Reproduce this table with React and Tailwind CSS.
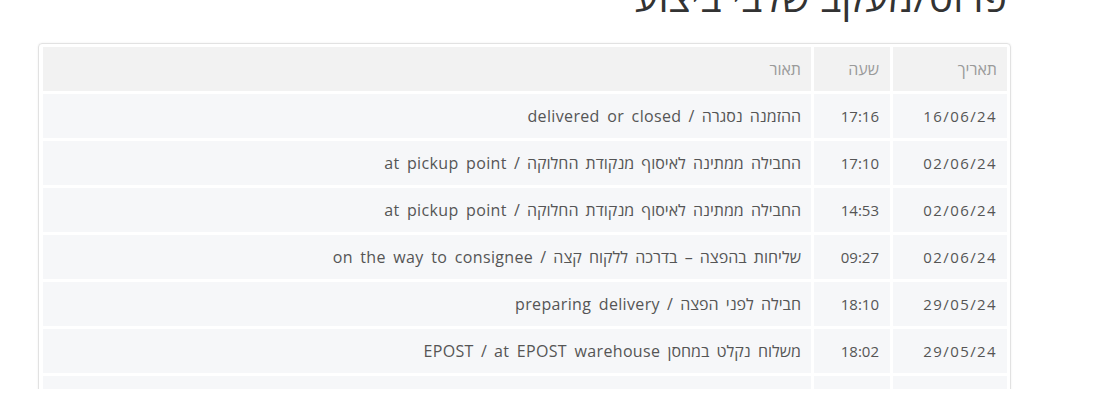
import React from "react";

const rows = [
  ["16/06/24", "17:16", "ההזמנה נסגרה / delivered or closed"],
  ["02/06/24", "17:10", "החבילה ממתינה לאיסוף מנקודת החלוקה / at pickup point"],
  ["02/06/24", "14:53", "החבילה ממתינה לאיסוף מנקודת החלוקה / at pickup point"],
  ["02/06/24", "09:27", "שליחות בהפצה – בדרכה ללקוח קצה / on the way to consignee"],
  ["29/05/24", "18:10", "חבילה לפני הפצה / preparing delivery"],
  ["29/05/24", "18:02", "משלוח נקלט במחסן EPOST / at EPOST warehouse"],
  ["28/05/24", "12:00", "ההזמנה התקבלה / order received"],
];

function Mixed({ text }) {
  const parts = text.split(/([A-Za-z]+(?: [A-Za-z]+)*)/);
  return (
    <>
      {parts.map((p, i) =>
        /^[A-Za-z]/.test(p) ? (
          <span key={i} className="tracking-[0.35px]">
            {p}
          </span>
        ) : (
          <span key={i}>{p}</span>
        )
      )}
    </>
  );
}

export default function App() {
  return (
    <div className="w-[1110px] h-[419px] bg-white overflow-hidden" style={{ fontFamily: '"Open Sans", "DejaVu Sans", sans-serif' }}>
      <div className="h-[389px] overflow-hidden">
        <div dir="rtl" className="ml-[38px] w-[973px]">
          <h2 className="-mt-[23px] pr-[4px] text-[40px] leading-[40px] text-[#333] font-normal">פרוט/מעקב שלבי ביצוע</h2>
          <div className="mt-[26px] border border-[#e2e2e2] rounded-[4px] shadow-[0_0_2px_rgba(0,0,0,0.08)] pl-px">
            <table className="w-full border-separate border-spacing-[3px] text-[15px]">
              <thead>
                <tr className="h-[44px]">
                  <th className="w-[114px] bg-[#f2f2f2] text-right pr-[10px] font-normal text-[16px] text-[#9a9a9a]">תאריך</th>
                  <th className="w-[76px] bg-[#f2f2f2] text-right pr-[11px] font-normal text-[16px] text-[#9a9a9a]">שעה</th>
                  <th className="bg-[#f2f2f2] text-right pr-[10px] font-normal text-[16px] text-[#9a9a9a]">תאור</th>
                </tr>
              </thead>
              <tbody>
                {rows.map((r, i) => (
                  <tr key={i} className="h-[44px]">
                    <td className="bg-[#f6f7f9] text-right pr-[10px] text-[#555] tracking-[1.4px]">{r[0]}</td>
                    <td className="bg-[#f6f7f9] text-right pr-[11px] text-[#555]">{r[1]}</td>
                    <td className="bg-[#f6f7f9] text-right pr-[10px] text-[#555] text-[16px] [word-spacing:3px]">
                      <Mixed text={r[2]} />
                    </td>
                  </tr>
                ))}
              </tbody>
            </table>
          </div>
        </div>
      </div>
    </div>
  );
}
